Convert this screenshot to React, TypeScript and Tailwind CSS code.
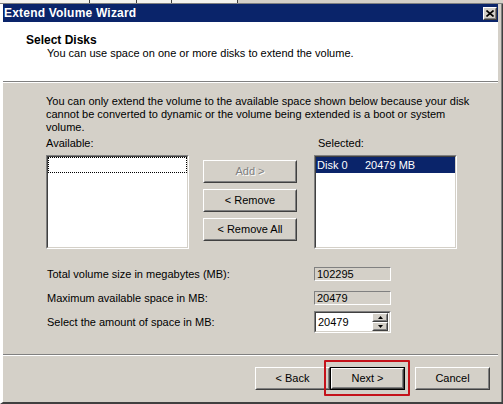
import React from "react";

const raisedOuter = "border border-t-white border-l-white border-r-[#404040] border-b-[#404040]";
const raisedInner = "border border-t-[#d4d0c8] border-l-[#d4d0c8] border-r-[#808080] border-b-[#808080]";
const sunkenOuter = "border border-t-[#808080] border-l-[#808080] border-r-white border-b-white";
const sunkenInner = "border border-t-[#404040] border-l-[#404040] border-r-[#d4d0c8] border-b-[#d4d0c8]";

function Button({ label, w, disabled, isDefault }: { label: string; w: string; disabled?: boolean; isDefault?: boolean }) {
    const body = (
        <div className={`${raisedOuter} flex-1 flex`}>
            <div className={`${raisedInner} flex-1 flex items-center justify-center bg-[#d4d0c8]`}>
                <span className={disabled ? "text-[#808080] [text-shadow:1px_1px_0_#fff]" : "text-black"}>{label}</span>
            </div>
        </div>
    );
    if (isDefault) {
        return <div className={`${w} h-[23px] flex border border-black`}>{body}</div>;
    }
    return <div className={`${w} h-[23px] flex`}>{body}</div>;
}

function ListBox({ children }: { children?: React.ReactNode }) {
    return (
        <div className={`${sunkenOuter} w-[143px] h-[94px] flex`}>
            <div className={`${sunkenInner} flex-1 bg-white flex flex-col`}>{children}</div>
        </div>
    );
}

function ReadBox({ value }: { value: string }) {
    return (
        <div className={`${sunkenOuter} w-[77px] h-[14px] flex items-center pl-[2px] bg-[#d4d0c8]`}>
            <span className="leading-[12px]">{value}</span>
        </div>
    );
}

function SpinBox({ value }: { value: string }) {
    return (
        <div className={`${sunkenOuter} w-[77px] h-[22px] flex`}>
            <div className={`${sunkenInner} flex-1 bg-white flex items-center`}>
                <span className="pl-[2px] flex-1">{value}</span>
                <div className="flex flex-col w-[16px] h-[18px] mr-[1px]">
                    {[0, 1].map((i) => (
                        <div key={i} className={`${raisedOuter} h-[9px] flex`}>
                            <div className={`${raisedInner} flex-1 bg-[#d4d0c8] flex items-center justify-center`}>
                                <svg width="5" height="3" viewBox="0 0 5 3">
                                    {i === 0 ? <path d="M2.5 0 L5 3 L0 3 Z" fill="#000" /> : <path d="M0 0 L5 0 L2.5 3 Z" fill="#000" />}
                                </svg>
                            </div>
                        </div>
                    ))}
                </div>
            </div>
        </div>
    );
}

export default function App() {
    return (
        <div className="w-[503px] h-[404px] bg-[#d4d0c8] flex flex-col text-[11px] leading-[13px] text-black font-['Liberation_Sans',Arial,sans-serif] overflow-hidden">
            {/* strip of the window behind */}
            <div className="h-[4px] flex bg-[#f4f3ee] border-b border-[#808080]">
                <div className="w-[90px] border-r border-[#404040]" />
                <div className="w-[47px] border-r border-[#404040]" />
                <div className="w-[35px] border-r border-[#404040]" />
                <div className="w-[66px] border-r border-[#404040]" />
                <div className="flex-1 bg-[#d4d0c8]" />
            </div>

            <div className="flex-1 flex flex-col border-l-[3px] border-l-white border-r border-r-[#404040] border-b-[2px] border-b-[#404040]">
                <div className="flex-1 flex flex-col border-r border-r-[#808080] pr-[3px]">
                    {/* title bar */}
                    <div className="h-[18px] bg-[#0a246a] flex items-center pl-[1px] pr-[1px]">
                        <span className="flex-1 text-white font-bold text-[12px] tracking-[0.2px]">Extend Volume Wizard</span>
                        <div className={`${raisedOuter} w-[14px] h-[13px] flex`}>
                            <div className={`${raisedInner} flex-1 bg-[#d4d0c8] flex items-center justify-center`}>
                                <svg width="8" height="7" viewBox="0 0 8 7">
                                    <path d="M0.5 0.5 L7.5 6.5 M7.5 0.5 L0.5 6.5" stroke="#000" strokeWidth="1.6" />
                                </svg>
                            </div>
                        </div>
                    </div>

                    {/* header */}
                    <div className="h-[59px] bg-white pt-[12px] pl-[23px]">
                        <div className="font-bold text-[12px]">Select Disks</div>
                        <div className="pl-[21px]">You can use space on one or more disks to extend the volume.</div>
                    </div>
                    <div className="h-px bg-[#808080]" />
                    <div className="h-px bg-white" />

                    {/* body */}
                    <div className="flex flex-col pl-[43px] pt-[12px]">
                        <p className="whitespace-nowrap">
                            You can only extend the volume to the available space shown below because your disk
                            <br />
                            cannot be converted to dynamic or the volume being extended is a boot or system
                            <br />
                            volume.
                        </p>
                        <div className="flex mt-[3px]">
                            <span className="w-[269px]">Available:</span>
                            <span className="pl-[3px]">Selected:</span>
                        </div>
                        <div className="flex mt-[5px] items-start">
                            <ListBox>
                                <div className="h-[16px] border border-dotted border-black" />
                            </ListBox>
                            <div className="flex flex-col gap-[6px] ml-[14px] mt-[5px]">
                                <Button label="Add >" w="w-[94px]" disabled />
                                <Button label="< Remove" w="w-[94px]" />
                                <Button label="< Remove All" w="w-[94px]" />
                            </div>
                            <div className="ml-[17px]">
                                <ListBox>
                                    <div className="h-[16px] bg-[#0a246a] text-white flex items-center pl-px">
                                        <span className="w-[48px]">Disk 0</span>
                                        <span>20479 MB</span>
                                    </div>
                                </ListBox>
                            </div>
                        </div>

                        <div className="flex flex-col mt-[18px]">
                            <div className="flex items-center h-[14px]">
                                <span className="w-[268px] pl-px">Total volume size in megabytes (MB):</span>
                                <ReadBox value="102295" />
                            </div>
                            <div className="flex items-center h-[14px] mt-[10px]">
                                <span className="w-[268px] pl-px">Maximum available space in MB:</span>
                                <ReadBox value="20479" />
                            </div>
                            <div className="flex items-center h-[22px] mt-[6px]">
                                <span className="w-[268px] pl-px">Select the amount of space in MB:</span>
                                <SpinBox value="20479" />
                            </div>
                        </div>
                    </div>

                    {/* footer */}
                    <div className="mt-[21px] h-px bg-[#808080]" />
                    <div className="h-px bg-white" />
                    <div className="flex justify-end pr-[8px] mt-[11px]">
                        <Button label="< Back" w="w-[75px]" />
                        <div className="relative">
                            <Button label="Next >" w="w-[75px]" isDefault />
                            <div className="absolute -left-[6px] -top-[7px] w-[86px] h-[36px] border-2 border-[#c4121a] rounded-[1px] pointer-events-none" />
                        </div>
                        <div className="ml-[10px]">
                            <Button label="Cancel" w="w-[75px]" />
                        </div>
                    </div>
                </div>
            </div>
        </div>
    );
}
